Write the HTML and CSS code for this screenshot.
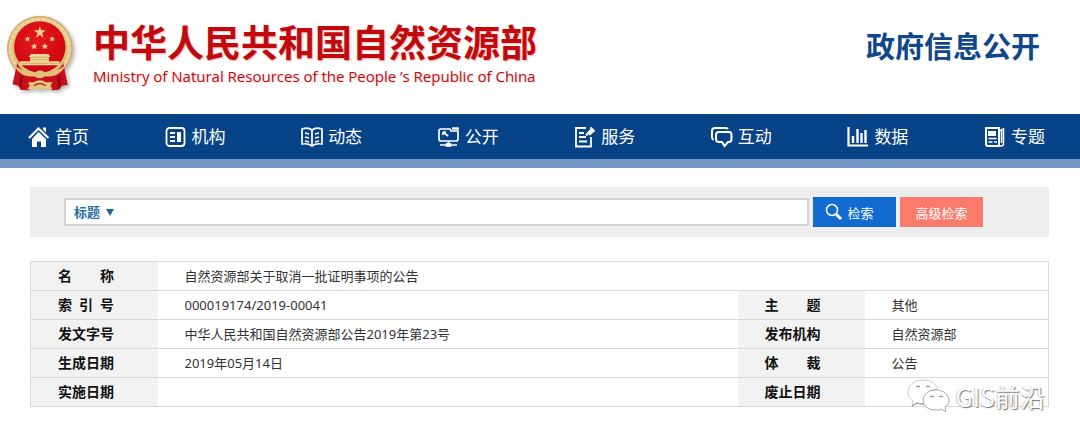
FILE: index.html
```html
<!DOCTYPE html>
<html lang="zh-CN">
<head>
  <meta charset="UTF-8" />
  <title>中华人民共和国自然资源部 - 政府信息公开</title>
  <meta name="viewport" content="width=device-width, initial-scale=1.0" />
  <link rel="stylesheet" href="styles.css">
</head>
<body>
  <header class="header">
    <div class="brand">
      <svg class="emblem" viewBox="22 12 204 228" aria-hidden="true">
        <defs>
          <radialGradient id="red" cx="45%" cy="35%" r="70%">
            <stop offset="0" stop-color="#e81a1c" />
            <stop offset="1" stop-color="#c80410" />
          </radialGradient>
        </defs>
        <!-- wreath -->
        <ellipse cx="122" cy="112" rx="97" ry="96" fill="#dcb976" stroke="#cda968" stroke-width="3" />
        <ellipse cx="122" cy="112" rx="88" ry="87" fill="none" stroke="#ecd49c" stroke-width="10" stroke-dasharray="14 2" />
        <circle cx="122" cy="108" r="77" fill="url(#red)" />
        <!-- ribbons -->
        <path d="M54 156 C62 180 88 188 122 190 C156 188 182 180 192 156 L206 222 L188 224 L180 236 L158 238 L150 230 L96 230 L88 238 L64 236 L58 224 L40 220 Z" fill="#c8101a" />
        <path d="M62 194 L72 198 L66 234 L60 226 Z M184 194 L174 198 L178 234 L186 226 Z" fill="#95090f" />
        <!-- stars -->
        <g fill="#eed28b">
          <path d="M122 46 l4 12 h14 l-11 8 4 14 -11 -8 -11 8 4 -14 -11 -8 h14 Z" />
          <path d="M84 75 l3 5 6 -1 -4 5 3 5 -6 -1 -4 4 -1 -6 -5 -2 6 -3 Z" />
          <path d="M160 75 l-3 5 -6 -1 4 5 -3 5 6 -1 4 4 1 -6 5 -2 -6 -3 Z" />
          <path d="M105 97 l3 6 6 0 -4 5 2 6 -7 -3 -5 4 0 -7 -5 -4 7 -1 Z" />
          <path d="M137 97 l3 6 6 0 -4 5 2 6 -7 -3 -5 4 0 -7 -5 -4 7 -1 Z" />
        </g>
        <!-- gate -->
        <path d="M96 129 H148 L154 138 H149 V151 H181 V163 H62 V151 H93 V138 H88 Z" fill="#efd898" />
        <path d="M93 139 H149 M96 146 H148 M66 157 H178" stroke="#c39850" stroke-width="2" />
        <!-- lower wreath and gear -->
        <path d="M44 160 C66 184 88 176 106 186 C116 176 130 176 140 186 C156 176 178 184 200 160 C190 186 166 200 138 196 C128 204 114 204 106 196 C78 200 54 186 44 160 Z" fill="#e4c17a" />
        <path d="M86 214 L104 214 C114 206 130 206 140 214 L160 214 L154 224 L160 235 L140 233 L122 237 L104 233 L84 235 L92 224 Z" fill="#e6c67e" />
        <path d="M105 224 C114 216 130 216 139 224" fill="none" stroke="#c2141a" stroke-width="4" />
      </svg>
      <div class="brand-text">
        <h1>中华人民共和国自然资源部</h1>
        <p>Ministry of Natural Resources of the People ’s Republic of China</p>
      </div>
    </div>
    <div class="section-name">政府信息公开</div>
  </header>

  <nav class="nav">
    <a href="#">
      <svg viewBox="0 0 22 22"><path d="M1 12 L10.500 2.500 L20.500 12" fill="none" stroke="#fff" stroke-width="2.200" /><path d="M15 1.500 h3 v5 l-3 -3 Z M10.500 6 L18 13 V21 H13 V15.500 H9 V21 H4 V13 Z" fill="#fff" /></svg>
      首页
    </a>
    <a href="#">
      <svg viewBox="0 0 22 22"><rect x="1.500" y="2" width="18" height="18" rx="3" fill="none" stroke="#fff" stroke-width="1.800" /><path d="M5 7 h5 M5 11 h5 M5 15 h5" stroke="#fff" stroke-width="2" /><rect x="12" y="6" width="4" height="10" fill="#fff" /></svg>
      机构
    </a>
    <a href="#">
      <svg viewBox="0 0 22 22" fill="none" stroke="#fff" stroke-width="1.700"><path d="M11 4 Q7 1 1 3 V18 Q7 17 11 20 Q15 17 21 18 V3 Q15 1 11 4 V20" /><path d="M4 7 l4 1 M4 11 l4 1 M4 15 l4 1 M18 7 l-4 1 M18 11 l-4 1 M18 15 l-4 1" /></svg>
      动态
    </a>
    <a href="#">
      <svg viewBox="0 0 22 22" fill="none" stroke="#fff" stroke-width="1.700"><path d="M12 3 H3 Q1 3 1 5 V13 Q1 15 3 15 H18 Q20 15 20 13 V5 H13 Z" /><path d="M14 2.500 h7" stroke-width="2.400" /><path d="M5 6 l5 4 M5 6 h3 M5 6 v3 M10.500 15 v4 M2 19 h6 M13 19 h6" /><rect x="8.500" y="18" width="4" height="2" fill="#fff" /></svg>
      公开
    </a>
    <a href="#">
      <svg viewBox="0 0 22 22" fill="none" stroke="#fff" stroke-width="1.800"><path d="M12 2 H2 V20.500 H17 V11" /><path d="M5 7 h5 M5 11 h7 M5 15.500 h8" /><path d="M12 9.500 L17 4" stroke-width="2" /><path d="M13 7 l4.500 -5 3.500 3 -5 4.500 Z" fill="#fff" stroke="none" /><path d="M16.500 1.500 l4 4" /></svg>
      服务
    </a>
    <a href="#">
      <svg viewBox="0 0 22 22" fill="none" stroke="#fff" stroke-width="2"><path d="M2.500 14 Q1 13 1 11 V5 Q1 2 4 2 H14 Q16 2 17 3" /><path d="M8 6 H18 Q20.500 6 20.500 9 V13 Q20.500 16 18 16 H17 L13.500 20 L11 16 H8 Q5 16 5 13 V9 Q5 6 8 6 Z" /></svg>
      互动
    </a>
    <a href="#">
      <svg viewBox="0 0 22 22" fill="none" stroke="#fff"><path d="M1.500 1 V19.500 H21" stroke-width="2.200" /><path d="M6 10 V17 M10.500 3 V17 M14.500 7 V17 M18.500 4 V17" stroke-width="2.400" /></svg>
      数据
    </a>
    <a href="#">
      <svg viewBox="0 0 22 22" fill="none" stroke="#fff" stroke-width="2"><path d="M2 2 H15 V20 H4 Q2 20 2 18 Z" /><path d="M15 5 L19.500 3 V18 Q19.500 20 17 20 H14 M17.500 5 V17" stroke-width="1.500" /><rect x="4" y="5" width="8" height="5" fill="#fff" stroke="none" /><path d="M4.500 12.500 h8 M4.500 16 h4 M10 16 h3" stroke-width="1.500" /></svg>
      专题
    </a>
  </nav>

  <main class="container">
    <form class="search">
      <div class="search-box">
        <select aria-label="检索范围">
          <option>标题</option>
        </select>
        <span class="arrow"></span>
        <input type="text" aria-label="检索词">
      </div>
      <button type="button" class="btn-search">
        <svg viewBox="0 0 18 18"><circle cx="7" cy="7" r="5.500" fill="none" stroke="#fff" stroke-width="1.500" /><path d="M11 11 L16 16" stroke="#fff" stroke-width="3" /></svg>
        检索
      </button>
      <button type="button" class="btn-advanced">高级检索</button>
    </form>

    <div class="info">
      <table>
        <colgroup>
          <col class="col-label">
          <col>
          <col class="col-label">
          <col class="col-side">
        </colgroup>
        <tbody>
          <tr>
            <th scope="row">名&emsp;&emsp;称</th>
            <td colspan="3">自然资源部关于取消一批证明事项的公告</td>
          </tr>
          <tr>
            <th scope="row">索&ensp;引&ensp;号</th>
            <td>000019174/2019-00041</td>
            <th scope="row">主&emsp;&emsp;题</th>
            <td>其他</td>
          </tr>
          <tr>
            <th scope="row">发文字号</th>
            <td>中华人民共和国自然资源部公告2019年第23号</td>
            <th scope="row">发布机构</th>
            <td>自然资源部</td>
          </tr>
          <tr>
            <th scope="row">生成日期</th>
            <td>2019年05月14日</td>
            <th scope="row">体&emsp;&emsp;裁</th>
            <td>公告</td>
          </tr>
          <tr>
            <th scope="row">实施日期</th>
            <td></td>
            <th scope="row">废止日期</th>
            <td></td>
          </tr>
        </tbody>
      </table>

      <div class="watermark">
        <svg viewBox="0 0 44 38" fill="#fff" stroke="#aaa" aria-hidden="true">
          <path d="M17 3 C8 3 2 8 2 15 C2 19 4 22 7 24 L6 29 L11 26 C13 27 16 27 18 27 C16 18 23 12 32 12 C30 6 24 3 17 3 Z" stroke="#ccc" />
          <path d="M6 29 L11 26 C13 27 16 27 18 27" fill="none" stroke="#888" />
          <path d="M30 13 C22 13 17 18 17 23 C17 29 22 33 30 33 C32 33 34 33 35 32 L40 35 L39 30 C42 28 43 26 43 23 C43 18 38 13 30 13 Z" />
          <path d="M10 10 q2 -2 4 0 M20 10 q2 -2 4 0 M24 20 q2 -2 4 0 M33 20 q2 -2 4 0" fill="none" stroke="#777" />
        </svg>
        <span>GIS前沿</span>
      </div>
    </div>
  </main>
</body>
</html>
```
FILE: styles.css
```css
body {
  font-family: "Noto Sans", "Noto Sans CJK SC", sans-serif;
  background: #fff;
  margin: 0;
  color: #333;
}

.header {
  display: flex;
  justify-content: space-between;
  align-items: center;
  height: 114px;
  padding: 0 40px 0 6px;
  box-sizing: border-box;
}

.brand {
  display: flex;
  align-items: center;
  gap: 18px;
  padding-bottom: 8px;
}

.emblem {
  width: 69px;
  height: 76px;
  filter: drop-shadow(2px 2px 2px rgba(0,0,0,0.3));
}

.brand-text {
  color: #c00a0e;
  white-space: nowrap;
}

.brand-text h1 {
  margin: 0;
  font-family: "Noto Sans CJK SC", sans-serif;
  font-size: 37px;
  line-height: 46px;
  font-weight: bold;
  text-shadow: 1px 1px 2px rgba(192,10,14,0.3);
}

.brand-text p {
  margin: 0;
  font-family: "Open Sans", sans-serif;
  font-size: 15px;
  line-height: 24px;
  text-shadow: 1px 1px 2px rgba(192,10,14,0.2);
}

.section-name {
  font-family: "Noto Sans CJK SC", sans-serif;
  font-size: 29px;
  font-weight: bold;
  color: #10478b;
  padding-bottom: 24px;
}

.nav {
  display: flex;
  justify-content: space-between;
  align-items: center;
  height: 54px;
  padding: 0 35px 0 28px;
  box-sizing: border-box;
  background: #084387;
  border-bottom: 9px solid #7599c4;
}

.nav a {
  display: flex;
  align-items: center;
  gap: 5px;
  color: #fff;
  font-size: 17px;
  line-height: 24px;
  text-decoration: none;
}

.nav svg {
  width: 22px;
  height: 22px;
}

.container {
  padding: 19px 31px 36px 30px;
}

.search {
  display: flex;
  align-items: center;
  gap: 4px;
  height: 50px;
  padding: 0 66px 0 34px;
  background: #ededed;
}

.search-box {
  display: flex;
  align-items: center;
  flex: 1;
  height: 28px;
  box-sizing: border-box;
  border: 2px solid #d4d4d4;
  background: #fff;
}

.search-box select {
  appearance: none;
  width: 40px;
  padding: 0 0 0 8px;
  border: none;
  background: none;
  font-family: inherit;
  font-size: 13px;
  font-weight: bold;
  color: #2c6ea3;
}

.arrow {
  border: 4px solid transparent;
  border-top: 7px solid #1f659e;
  border-bottom: none;
}

.search-box input {
  flex: 1;
  border: none;
  outline: none;
  font-size: 13px;
}

.search button {
  display: flex;
  align-items: center;
  justify-content: center;
  width: 83px;
  height: 30px;
  padding: 0;
  border: none;
  color: #fff;
  font-family: inherit;
  font-size: 13px;
  cursor: pointer;
}

.search .btn-search {
  gap: 4px;
  padding-right: 10px;
  background: #136bd2;
}

.btn-search svg {
  width: 18px;
  height: 18px;
}

.search .btn-advanced {
  background: #fb7b6b;
}

.info {
  position: relative;
  margin-top: 24px;
}

table {
  width: 100%;
  table-layout: fixed;
  border-collapse: collapse;
  border: 1px solid #d9d9d9;
  font-size: 13px;
}

.col-label {
  width: 127px;
}

.col-side {
  width: 184px;
}

tr {
  border-bottom: 1px solid #d9d9d9;
}

th, td {
  height: 28px;
  padding: 0 0 0 27px;
  line-height: 20px;
  text-align: left;
}

th {
  background: #f2f2f2;
  color: #111;
  font-size: 14px;
}

.watermark {
  position: absolute;
  right: 4px;
  bottom: -8px;
  display: flex;
  align-items: center;
  gap: 6px;
  color: #fff;
  font-family: "Noto Sans CJK SC", sans-serif;
  font-size: 25px;
  line-height: 38px;
  text-shadow: 1px 1px 1px #777, -1px 0 1px #ccc;
}

.watermark svg {
  width: 44px;
  height: 38px;
}
```
